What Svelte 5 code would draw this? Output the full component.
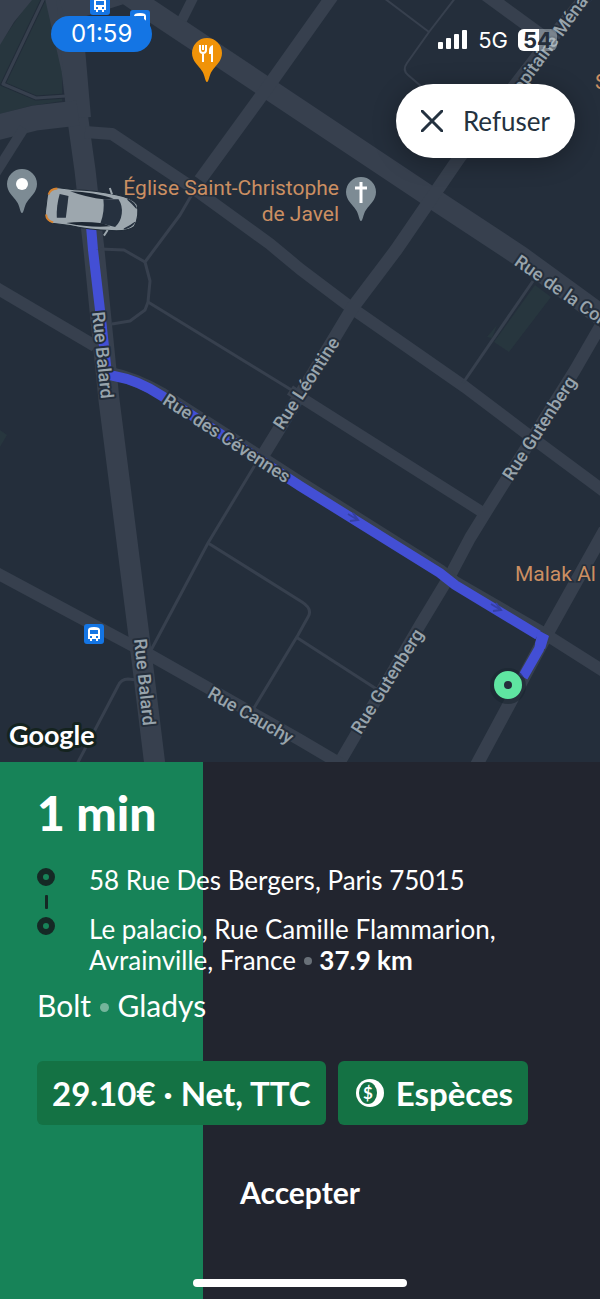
<script>
  const time = '01:59';
  const battery = 54;
  const progress = 33.8;

  const stops = [
    { address: '58 Rue Des Bergers, Paris 75015' },
    { address: 'Le palacio, Rue Camille Flammarion, Avrainville, France', distance: '37.9 km' }
  ];

  const roads = [
    { d: 'M55-5L72 70L78 120L85 170L94 250L109 400L123 510L142 660L155 766', w: 21 },
    { d: 'M68-5L74 60L79 118', w: 24 },
    { d: 'M62 8L125-12', w: 30 },
    { d: 'M-5 128L35 118L78 113', w: 25 },
    { d: 'M24 128L-5 174', w: 10 },
    { d: 'M115-14L150 10L300 110L435 200L520 256L605 318', w: 21 },
    { d: 'M195-6L182 20', w: 10 },
    { d: 'M333-5L267 88L200 180', w: 13 },
    { d: 'M85 132L112 134L190 186L270 244L300 269L353 309L465 387L535 440L605 492', w: 12 },
    { d: 'M592-10L550 40L459 158L396 250L353 307L300 395L262 457', w: 13 },
    { d: 'M482-8L545 38', w: 13 },
    { d: 'M-5 287L95 346', w: 12 },
    { d: 'M605 318L575 370L486 512L470 538L452 572L420 625L341 760', w: 12 },
    { d: 'M290 390L305 400L482 512', w: 11 },
    { d: 'M605 530L548 632L476 766', w: 13 },
    { d: 'M-5 572L75 615L150 655L210 689L300 740L344 766', w: 12 },
    { d: 'M110 373Q135 378 163 394L300 482L440 570L455 582L545 634L605 672', w: 12 },
    { d: 'M198 184L180 215L145 262L150 281L148 302L145 310L130 321L112 324', w: 3 },
    { d: 'M100 249L124 250L145 262', w: 3 },
    { d: 'M148 302L298 394', w: 3 },
    { d: 'M258 460L208 543L150 652', w: 3 },
    { d: 'M208 543L302 602Q313 609 308 617L298 635L254 708', w: 3 },
    { d: 'M296 637L378 690', w: 3 },
    { d: 'M137 680L128 679Q121 679 118 686L76 766', w: 3 },
    { d: 'M533 281L463 383', w: 3 },
    { d: 'M384-2L429 32L456-3', w: 2 },
    { d: 'M429 32L407 63Q402 70 408 75L422 87', w: 2 }
  ];

  const streets = [
    { name: 'Rue Balard', x: 103, y: 355, angle: 84, spread: 'middle' },
    { name: 'Rue Balard', x: 145, y: 682, angle: 84, spread: 'middle' },
    { name: 'Rue des Cévennes', x: 227, y: 438, angle: 33, spread: 'middle' },
    { name: 'Rue Léontine', x: 306, y: 383, angle: -57, spread: 'middle' },
    { name: 'Rue Gutenberg', x: 539, y: 428, angle: -57, spread: 'middle' },
    { name: 'Rue Gutenberg', x: 387, y: 681, angle: -58, spread: 'middle' },
    { name: 'Rue Cauchy', x: 251, y: 715, angle: 30, spread: 'middle' },
    { name: 'Rue de la Convention', x: 517, y: 259, angle: 35, spread: 'start' },
    { name: 'Rue du Capitaine Ménard', x: 593, y: -16, angle: -54, spread: 'end' }
  ];

  const buses = [
    { x: 100, y: 5 },
    { x: 140, y: 20 },
    { x: 94, y: 634 }
  ];
</script>

{#snippet pin(x, y, kind)}
  <g transform="translate({x} {y})">
    <path class="pin pin--{kind}" d="M0 29C-2 29-2 22-5 18C-9 12-15 8-15 0A15 15 0 0 1 15 0C15 8 9 12 5 18C2 22 2 29 0 29Z" />
    {#if kind === 'food'}
      <path d="M-7-8V-3M-4-8V-3M-1-8V-3M-7-3Q-7 0-4 0Q-1 0-1-3M-4-1V9" fill="none" stroke="#fff" stroke-width="2" />
      <path d="M6 9V-8Q2-7 2-2V1H4V9Z" fill="#fff" />
    {:else if kind === 'church'}
      <path d="M0-10V11M-6-4H6" fill="none" stroke="#fff" stroke-width="3" />
    {:else}
      <circle r="6" fill="#fff" />
    {/if}
  </g>
{/snippet}

<main class="screen">
  <section class="map" aria-label="Carte">
    <svg class="map-canvas" viewBox="0 0 600 762">
      <rect width="600" height="762" fill="#242e3b" />
      <path class="park" d="M30 0H62V101L30 106L0 114V44Z" />
      <path class="park" d="M535 285L551 297L509 352L494 342ZM497 325L492 338L487 337ZM0 430L7 435L0 447Z" />
      <path d="M0 0H32L14 22L0 45Z" fill="#37404e" />
      <path class="road-edge" d="M44-2L3 84L36 98L66 96" />
      <path class="road" stroke-width="3" d="M44-2L3 84L36 98L66 96" />
      {#each roads as road}
        <path class="road" d={road.d} stroke-width={road.w} />
      {/each}

      <path class="route" d="M91 226L93 250L100 310L107 374L114 376Q138 380 162 396L300 486L440 573L455 585L538 635" />
      <path class="route" d="M543 634L539 649L523 677" />
      <path class="route-corner" d="M538 630L549 636L545 649L535 644Z" />
      <path class="arrow" d="M348 514L358 520M353 513L358 520L350 521M491 604L501 610M496 603L501 610L493 611" />

      {#each streets as street}
        <text
          class="street"
          text-anchor={street.spread}
          dominant-baseline="central"
          transform="translate({street.x} {street.y}) rotate({street.angle})">{street.name}</text>
      {/each}

      <g class="poi">
        <text x="339" y="195" text-anchor="end">Église Saint-Christophe</text>
        <text x="339" y="221" text-anchor="end">de Javel</text>
        <text x="515" y="581">Malak Al Tawouk</text>
        <text x="595" y="89">S</text>
      </g>

      {#each buses as bus}
        <g transform="translate({bus.x} {bus.y})">
          <rect x="-10" y="-10" width="20" height="20" rx="3" fill="#1475e4" />
          <path fill="#fff" fill-rule="evenodd" d="M-6-4Q-6-7 0-7Q6-7 6-4V5H4V7H2V5H-2V7H-4V5H-6ZM-4-4V0H4V-4ZM-4 2V4H-2V2ZM2 2V4H4V2Z" />
        </g>
      {/each}

      {@render pin(207, 53, 'food')}
      {@render pin(361, 192, 'church')}
      {@render pin(22, 184, 'place')}

      <g transform="translate(92 210) rotate(7)">
        <path d="M-38-18H-20Q0-20 22-18Q38-17 44-11Q48 0 44 11Q38 17 22 18Q0 20-20 18H-38Q-46 16-46 8V-8Q-46-16-38-18Z" fill="#9da7ae" stroke="#202b37" />
        <path d="M18-18L15-24M18 18L15 24" fill="none" stroke="#9da7ae" stroke-width="2" />
        <path d="M-24-16Q0-18 20-14L12-12Q-8-12-24-16Z" fill="#1d2733" />
        <path d="M-24 16Q0 18 20 14L12 12Q-8 12-24 16Z" fill="#1d2733" />
        <path d="M-34-12L-25-11V11L-34 12Q-36 0-34-12Z" fill="#26313f" />
        <path d="M10-12L25-14Q30-8 30 0Q30 8 25 14L10 12Q13 0 10-12Z" fill="#26313f" />
        <path d="M34-15Q41-13 44-7Q40-11 34-15ZM34 15Q41 13 44 7Q40 11 34 15Z" fill="#26313f" stroke="#26313f" />
        <path d="M-45-10Q-44-16-37-17M-45 10Q-44 16-37 17" fill="none" stroke="#d7822e" stroke-width="2" />
      </g>

      <circle cx="508" cy="686" r="18" fill="#1b2630" opacity="0.6" />
      <circle cx="508" cy="685" r="9" fill="#242e3b" stroke="#5fe5a1" stroke-width="10" />

      <text class="google" x="9" y="745">Google</text>
    </svg>

    <header class="status">
      <time class="clock">{time}</time>
      <div class="signal">
        <svg width="30" height="20" viewBox="0 0 30 20" fill="#fff" aria-hidden="true">
          <rect y="12" width="5" height="7" rx="1" />
          <rect x="8" y="8" width="5" height="11" rx="1" />
          <rect x="16" y="4" width="5" height="15" rx="1" />
          <rect x="24" width="5" height="19" rx="1" />
        </svg>
        <span>5G</span>
        <span class="battery"><span class="battery-level" style="width: {battery}%"></span><b>{battery}</b></span>
      </div>
    </header>

    <button class="refuse" type="button">
      <svg width="22" height="22" viewBox="0 0 22 22" aria-hidden="true">
        <path d="M1 1L21 21M21 1L1 21" fill="none" stroke="#243240" stroke-width="3" stroke-linecap="round" />
      </svg>
      Refuser
    </button>
  </section>

  <section class="sheet">
    <div class="progress" style="width: {progress}%"></div>
    <div class="details">
      <h1>1 min</h1>
      <ol class="stops">
        {#each stops as stop}
          <li>
            <svg width="18" height="18" viewBox="0 0 18 18" aria-hidden="true">
              <circle cx="9" cy="9" r="6" fill="none" stroke="#152925" stroke-width="6" />
            </svg>
            <span>{stop.address}{#if stop.distance}{' '}<i class="dot"></i> <b>{stop.distance}</b>{/if}</span>
          </li>
        {/each}
      </ol>
      <p class="rider">Bolt <i class="dot dot--large"></i> Gladys</p>
      <div class="chips">
        <span class="chip">29.10€ · Net, TTC</span>
        <span class="chip">
          <svg width="28" height="28" viewBox="0 0 28 28" aria-hidden="true">
            <circle cx="14" cy="14" r="14" fill="#fff" />
            <ellipse cx="12" cy="14" rx="9" ry="11" fill="#147244" />
            <text x="12" y="20" text-anchor="middle" class="coin">$</text>
          </svg>
          Espèces
        </span>
      </div>
      <button class="accept" type="button">Accepter</button>
    </div>
    <div class="home-bar"></div>
  </section>
</main>

<style>
  :global(body) {
    margin: 0;
    background: #22252f;
  }

  .screen {
    display: flex;
    flex-direction: column;
    min-height: 100vh;
    font-family: Lato, 'Open Sans', sans-serif;
    color: #fff;
  }

  .map {
    position: relative;
    overflow: hidden;
  }

  .map-canvas {
    display: block;
    width: 100%;
  }

  .road {
    fill: none;
    stroke: #37404e;
    stroke-linejoin: round;
  }

  .road-edge {
    fill: none;
    stroke: #222c39;
    stroke-width: 5px;
  }

  .park {
    fill: #27363e;
  }

  .route {
    fill: none;
    stroke: #434fd5;
    stroke-width: 10px;
  }

  .route-corner {
    fill: #434fd5;
  }

  .arrow {
    fill: none;
    stroke: #3540a4;
    stroke-width: 2px;
  }

  .street {
    font: 500 18px Roboto, sans-serif;
    fill: #98a4ac;
    stroke: #242e3b;
    stroke-width: 4px;
    stroke-linejoin: round;
    paint-order: stroke;
  }

  .poi {
    font: 400 21px Roboto, sans-serif;
    fill: #cb8f62;
    stroke: #242e3b;
    stroke-width: 3px;
    paint-order: stroke;
  }

  .pin--food {
    fill: #f09309;
  }

  .pin--church,
  .pin--place {
    fill: #7d8b94;
  }

  .google {
    font: 700 27px Lato, sans-serif;
    fill: #fff;
    stroke: #14231f;
    stroke-width: 6px;
    stroke-linejoin: round;
    paint-order: stroke;
  }

  .status {
    position: absolute;
    inset: 16px 43px auto 51px;
    display: flex;
    align-items: center;
    justify-content: space-between;
    font-family: Inter, sans-serif;
  }

  .clock {
    padding: 0 20px;
    border-radius: 18px;
    background: #1475e4;
    font-size: 24px;
    line-height: 36px;
  }

  .signal {
    display: flex;
    align-items: center;
    gap: 10px;
    padding-top: 12px;
    font-size: 22px;
    line-height: 24px;
  }

  .battery {
    position: relative;
    width: 39px;
    overflow: hidden;
    border-radius: 6px;
    background: rgba(190, 200, 205, 0.5);
    color: #242e3b;
    line-height: 22px;
    text-align: center;
  }

  .battery-level {
    position: absolute;
    inset: 0 auto 0 0;
    background: #fff;
  }

  .battery b {
    position: relative;
  }

  .refuse {
    position: absolute;
    top: 84px;
    right: 25px;
    display: flex;
    align-items: center;
    gap: 20px;
    padding: 0 25px;
    border: 0;
    border-radius: 37px;
    background: #fff;
    box-shadow: 0 4px 24px rgba(0, 0, 0, 0.3);
    color: #243240;
    font: 400 26px/74px Lato, sans-serif;
  }

  .sheet {
    position: relative;
    flex: 1;
    display: flex;
    flex-direction: column;
    justify-content: space-between;
    background: #22252f;
  }

  .progress {
    position: absolute;
    inset: 0 auto 0 0;
    background: #178358;
  }

  .details {
    position: relative;
    display: flex;
    flex-direction: column;
    padding: 23px 37px 0;
  }

  h1 {
    margin: 0;
    font-size: 48px;
    font-weight: 900;
    line-height: 56px;
  }

  .stops {
    display: flex;
    flex-direction: column;
    gap: 18px;
    margin: 24px 0 0;
    padding: 0;
    list-style: none;
    font-size: 26px;
    line-height: 31px;
  }

  .stops li {
    position: relative;
    display: grid;
    grid-template-columns: 18px 1fr;
    gap: 34px;
  }

  .stops svg {
    margin-top: 3px;
  }

  .stops li + li::before {
    content: '';
    position: absolute;
    top: -19px;
    left: 8px;
    width: 3px;
    height: 14px;
    border-radius: 1px;
    background: #152925;
  }

  .dot {
    display: inline-block;
    width: 8px;
    height: 8px;
    margin: 0 1px 4px;
    border-radius: 50%;
    background: #697078;
    vertical-align: middle;
  }

  .dot--large {
    width: 9px;
    height: 9px;
    background: #74b59b;
  }

  .rider {
    margin: 12px 0 0;
    font-size: 30px;
    line-height: 34px;
  }

  .chips {
    display: flex;
    flex-wrap: wrap;
    gap: 12px;
    margin-top: 39px;
  }

  .chip {
    display: flex;
    align-items: center;
    gap: 12px;
    padding: 0 15px;
    border-radius: 6px;
    background: #147244;
    font-size: 33px;
    font-weight: 700;
    line-height: 64px;
  }

  .chip:last-child {
    padding-left: 18px;
  }

  .coin {
    font: 700 17px Lato, sans-serif;
    fill: #fff;
  }

  .accept {
    margin-top: 35px;
    padding: 0;
    border: 0;
    background: none;
    color: #fff;
    font: 700 30px/64px Lato, sans-serif;
  }

  .home-bar {
    position: relative;
    align-self: center;
    width: 214px;
    height: 8px;
    margin-bottom: 12px;
    border-radius: 4px;
    background: #fff;
  }
</style>
